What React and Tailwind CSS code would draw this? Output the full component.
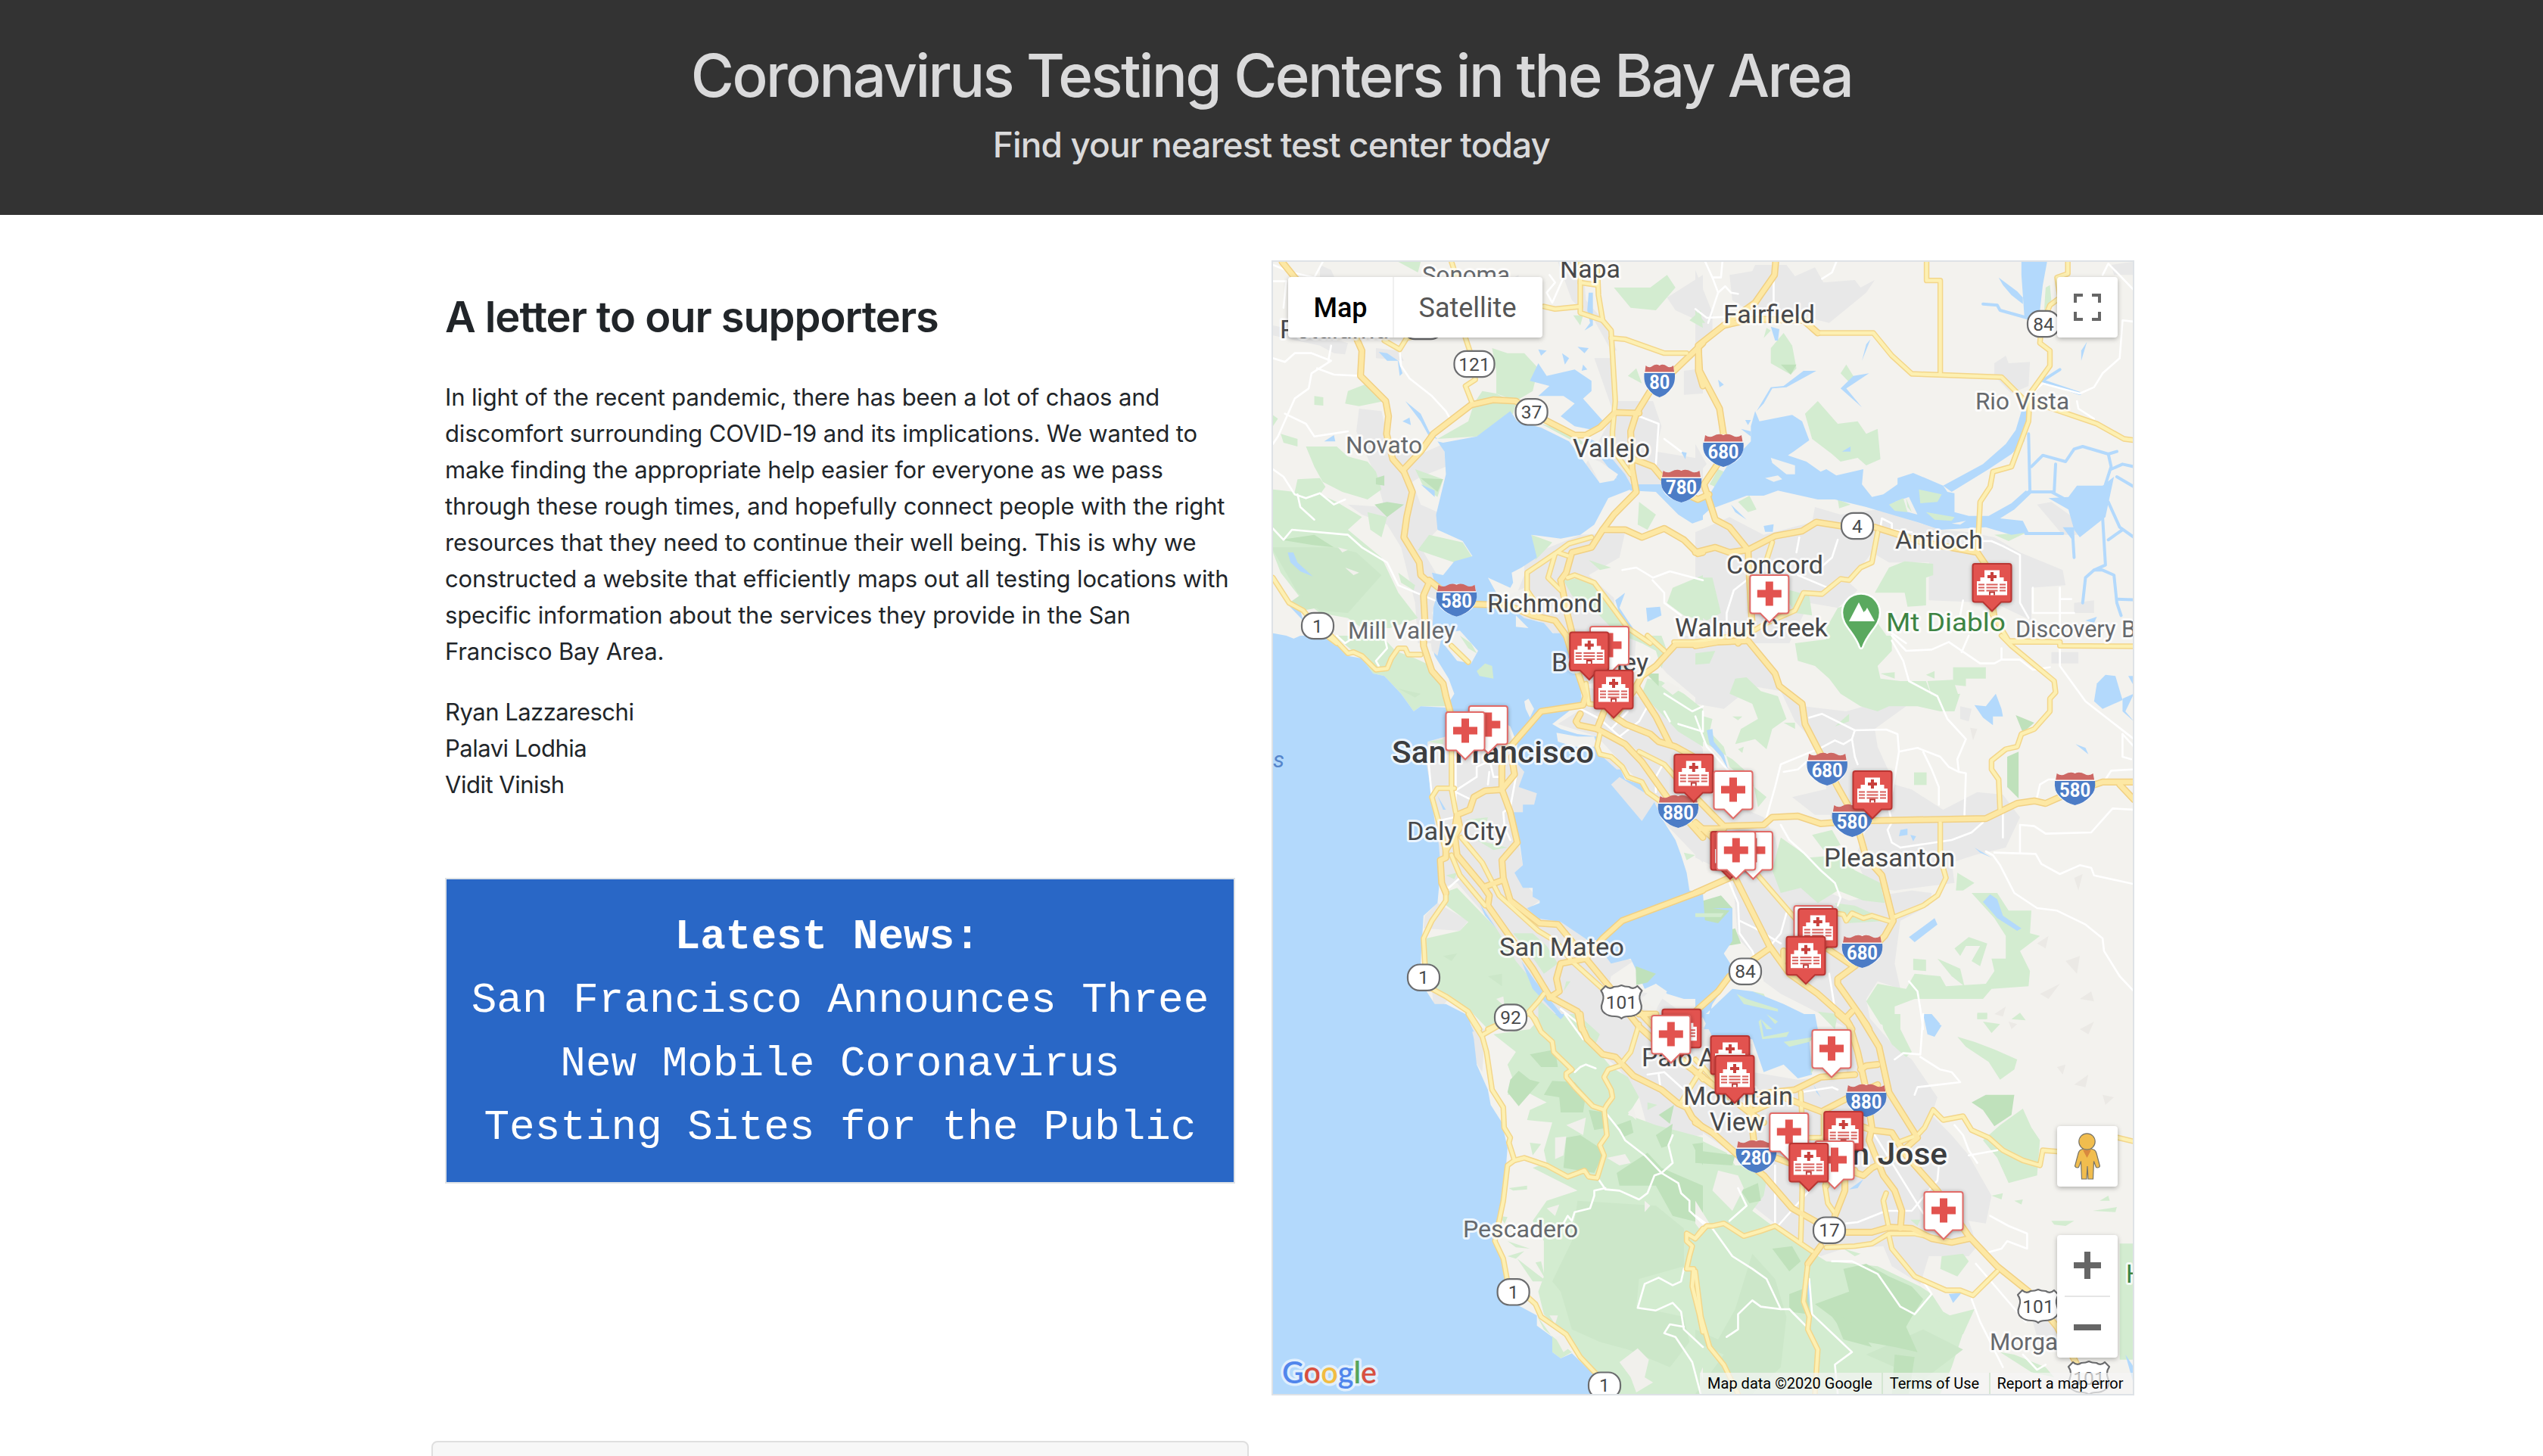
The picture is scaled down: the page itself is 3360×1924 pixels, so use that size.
import React from "react";

// Map geometry, kept per tile. Each tile has its own local unit grid.
const tiles = [
  {
    t: "translate(1670 330) scale(0.3699 0.33333)",
    urban: [
      "32,300 200,340 300,370 290,415 250,410 200,380 32,340",
      "340,630 420,640 445,760 560,810 640,770 650,860 560,900 530,920 560,1010 640,1050 620,1110 560,1180 640,1330 600,1440 640,1560 550,1560 540,1400 490,1180 440,1090 350,1050 300,1010 430,1020 400,900 330,720",
      "1050,48 1140,48 1150,200 1220,290 1260,400 1240,400 1180,280 1100,200",
      "1180,430 1240,430 1260,600 1390,600 1420,700 1400,800 1568,830 1568,960 1300,950 1200,920 1150,850 1250,650",
      "1568,100 1440,190 1470,240 1568,290", "1500,480 1568,470 1568,570 1500,575",
      "930,1220 1130,1130 1290,1120 1270,1220 1160,1290 1250,1380 1260,1500 1300,1560 1080,1560 980,1470 900,1480 890,1400 930,1290",
      "400,390 480,400 500,440 400,430", "200,60 240,80 260,130 200,110", "860,130 910,100 900,210 860,200",
    ],
    green: [
      "480,48 560,48 550,90", "1250,150 1380,150 1440,100 1470,150 1400,240 1310,230", "1520,280 1560,240 1568,310",
      "815,390 870,410 930,410 980,470 960,560 900,600 830,570 830,480", "300,560 370,530 430,600 340,620 290,610",
      "180,580 212,585 212,618 180,615", "620,750 730,680 750,610 780,560 830,570 900,610 890,650 760,740",
      "990,690 1060,710 1120,745 1170,790 1090,750", "150,780 260,780 300,820 370,840 400,880 420,950 370,990 280,960 210,920 180,860",
      "32,950 110,960 120,910 200,905 220,940 200,970 260,1000 350,1060 300,1110 420,1220 480,1360 550,1460 450,1500 350,1500 300,1460 200,1440 130,1380 60,1280 32,1200",
      "370,1040 440,1060 420,1140 380,1110", "590,1130 710,1160 745,1220 680,1240 600,1210 550,1190", "540,870 640,910 620,980 570,940",
      "1460,1340 1568,1290 1568,1470 1500,1450 1440,1400", "1070,1310 1140,1300 1220,1360 1280,1450 1350,1560 1260,1520 1190,1440 1100,1370",
      "955,1130 1030,1160 970,1230", "1340,1000 1400,1050 1370,1110 1335,1090", "60,730 120,750 120,780 70,765", "32,655 50,670 32,700",
      "480,1280 540,1330 535,1350 490,1320", "1300,500 1330,470 1350,530", "1160,1230 1240,1260 1200,1270", "1105,260 1140,260 1130,300",
    ],
    dark: ["395,1010 440,1000 500,1010 440,1060", "60,1150 180,1130 250,1180 170,1170", "560,905 640,910 620,960", "400,905 430,895 430,935 400,930"],
    mid: ["90,1400 180,1330 190,1420 140,1430", "32,1180 250,1180 330,1200 420,1290 300,1440 200,1430 120,1360 32,1190"],
    light: ["290,1260 340,1280 320,1290", "265,1180 300,1190 280,1200"],
    water: [
      "640,765 760,740 880,640 905,680 990,705 1090,760 1150,850 1200,925 1260,905 1310,950 1230,985 1180,1090 1130,1130 1060,1145 955,1130 975,1220 920,1260 885,1280 890,1320 880,1340 800,1300 840,1380 930,1460 1000,1480 1070,1570 600,1570 605,1420 620,1360 600,1280 640,1290 680,1235 745,1215 710,1155 620,1110 615,1050 650,890 645,800 620,760",
      "1150,740 1200,770 1290,890 1310,930 1440,930 1568,1010 1568,1070 1530,1085 1480,1050 1400,960 1310,955 1260,905 1200,820",
      "980,450 1010,500 1110,475 1170,520 1170,560 1140,590 1220,690 1200,720 1110,700 1060,660 1110,610 1070,580 980,580 1020,540 950,520",
      "980,395 1010,400 990,420", "1120,385 1160,390 1145,410", "1065,410 1090,430 1075,455", "1140,455 1155,475 1135,480",
      "1160,170 1175,170 1175,300 1145,320 1165,290 1155,240", "410,405 440,410 480,440 495,490 485,500 478,440 440,440",
      "505,600 560,650 590,720 620,750 590,740 560,680", "85,1200 105,1200 120,1240 175,1295 130,1275 95,1240",
      "32,1520 80,1530 170,1570 32,1570", "80,1400 130,1430 140,1470", "1255,1390 1290,1360 1270,1420 1330,1520 1280,1480", "1365,1420 1415,1415 1420,1450 1370,1475",
      "215,760 250,735 255,760", "495,680 520,665 525,695", "1490,800 1510,805 1505,830", "560,930 610,955 610,980",
    ],
    land: ["1150,820 1200,840 1265,890 1250,915 1200,925", "870,1370 930,1340 960,1360 940,1420 900,1400", "900,1450 945,1500 900,1495"],
    white: [
      "485,400 490,460 520,510 600,580 650,640 670,680", "32,430 75,445 110,410 170,410 240,440 170,490 160,550 110,590 50,740 32,770",
      "190,470 250,495 345,500", "75,650 150,690 180,740 300,720", "32,870 70,900 110,970 150,985 200,965 250,1010 290,990",
      "120,970 130,1020 180,1070", "32,1105 70,1150 100,1110 300,1130 350,1180 440,1240 480,1330 610,1390", "1340,660 1410,690 1400,850",
      "1430,750 1490,800", "1020,100 1040,130 1010,170 1030,210 1070,110", "1280,1270 1330,1260 1390,1300 1450,1275 1568,1310", "1388,1310 1430,1360 1430,1400 1490,1450",
      "32,60 100,90 180,110 210,48", "32,125 80,125 70,230", "240,380 230,440",
    ],
    minor: [
      "670,48 700,150 720,350 735,400 755,515 720,540 745,610", "1190,48 1195,180 1210,280 1240,320 1255,600 1245,720 1245,790 1310,890",
      "1130,48 1130,250 1210,280", "1130,130 1190,140", "1130,225 1040,235 1000,225", "1240,350 1290,355 1430,410 1510,410",
      "430,360 485,395 510,350 600,330", "32,1300 90,1400 140,1430 200,1510 260,1560", "1170,1140 1090,1165 1040,1205 940,1280 940,1350 970,1400",
      "1040,1205 1015,1300 1060,1350", "1050,1200 1090,1215", "1085,1300 1110,1290 1180,1320 1220,1380 1300,1500 1380,1560", "1465,1555 1568,1555",
    ],
    major: [
      "65,48 110,110 330,350 350,400 345,500 435,600 445,660 438,730 460,830 500,880 530,960 510,1060 500,1140 555,1240 560,1290 590,1320 570,1370 575,1470 570,1560",
      "590,1310 630,1345 750,1405 870,1410 960,1450 1040,1470 1080,1530 1110,1560", "1568,370 1465,480 1380,560 1330,650 1310,720 1315,870 1330,960 1250,1050 1210,1110 1170,1180 1100,1200 1080,1280 1060,1310 1085,1450 1110,1560",
      "500,870 560,800 605,730 740,615 820,595 900,600 960,650 1110,735 1150,735 1200,705 1255,645 1340,648", "1210,1110 1290,1110 1350,1140 1430,1105 1500,1150 1550,1205 1568,1200",
      "1320,830 1390,860 1420,900 1490,960 1550,990 1590,970", "1552,390 1552,480 1568,540",
    ],
  },
  {
    t: "translate(2240 330) scale(0.3763 0.33333)",
    urban: [
      "120,100 200,85 210,60 320,60 350,105 420,70 450,130 560,120 580,150 630,120 600,170 470,290 400,270 200,250 130,200",
      "0,80 60,250 60,330 0,370", "1050,450 1090,420 1100,450 1175,445 1170,540 1110,570 1050,500",
      "0,1120 120,1060 240,1130 410,1080 420,1020 510,1050 640,1030 860,1110 960,1120 1050,1140 1140,1200 1290,1270 1300,1330 1180,1340 1180,1470 1050,1400 820,1390 820,1240 680,1240 620,1200 540,1320 570,1350 500,1420 400,1400 330,1560 100,1560 0,1440",
      "1200,1010 1250,1000 1350,1080 1360,1130 1290,1130", "0,770 40,850 0,900", "1330,1400 1400,1390 1400,1440 1330,1440", "1470,100 1537,100 1537,48 1460,60",
    ],
    green: [
      "265,390 310,330 340,380 355,470 335,495 265,450", "385,650 430,600 500,690 570,680 600,730 640,710 650,830 600,855 570,825 510,840 480,810 410,750",
      "510,490 530,455 560,510 540,525", "240,350 250,310 265,320", "550,970 575,925 620,980", "50,930 80,870 100,880 70,940", "150,1000 190,975 215,1030 185,1040",
      "630,1360 680,1260 735,1235 835,1245 835,1290 810,1300 810,1410 745,1415 735,1360",
      "0,1300 60,1300 90,1440 40,1470 0,1440", "1050,1130 1165,1120 1100,1155", "300,1340 400,1370 410,1450 350,1440", "460,1500 500,1420 560,1400 640,1480 690,1560 460,1560",
      "1230,150 1245,140 1250,200 1225,240", "0,240 35,290 0,290", "500,990 545,1010 505,1025",
    ],
    dark: ["300,455 355,455 335,495"],
    water: [
      "195,760 195,700 210,640 225,680 340,655 375,680 400,755 345,800 325,815 390,840 440,880 460,870 495,895 590,870 585,930 620,980 660,970 710,930 710,905 765,885 870,935 885,960 910,965 910,1040 960,1055 1030,1055 1110,1005 1160,955 1180,965 1120,1030 1070,1065 1150,1075 1170,1120 1110,1130 1020,1100 860,1110 780,1080 660,1040 600,1020 490,990 430,990 290,955 240,975 180,975 50,1030 0,1080 0,1010 50,970 110,860",
      "870,935 1010,850 1090,770 1125,715 1145,640 1175,640 1155,760 1110,810 1030,870 900,960",
      "1310,980 1340,935 1430,935 1470,900 1440,1060 1350,1140 1330,1110 1310,1030 1240,985",
      "1145,48 1235,48 1220,140 1210,240 1190,290 1155,260 1150,180 1145,100", "1065,110 1130,165 1150,190 1150,215 1110,180 1080,140",
      "425,480 380,480 310,540 265,545 215,640 240,610 270,550 320,545", "555,500 610,490 530,550 585,625 510,550", "615,355 585,440 600,375", "265,305 295,315 290,360 280,360",
      "80,515 100,535 85,545", "1355,440 1375,365 1355,400", "240,1095 275,1088 272,1118 245,1118", "125,1010 180,1070 140,1040", "160,710 195,720 195,740", "175,675 195,675 185,695",
      "1290,1100 1330,1100 1330,1160", "1370,1470 1410,1455 1400,1480", "515,800 545,780 545,800",
    ],
    land: ["265,825 350,855 350,890 320,890 270,845", "245,905 290,895 305,910 275,920", "700,1000 750,980 780,1050 730,1035", "900,1085 950,1075 930,1090"],
    greenTop: ["680,1010 730,985 745,1040 700,1035", "785,950 865,970 850,1000 790,1005", "740,985 760,1040 745,1020", "810,1040 910,1060 900,1075 840,1070"],
    channel: [
      "1170,730 1175,960", "1180,860 1220,815 1300,840 1330,790 1360,780 1450,810 1460,860 1440,930", "1265,850 1260,960 1180,960", "1170,960 1250,960 1300,990",
      "1430,1060 1440,1250 1400,1270 1430,1270 1470,1290 1480,1400 1495,1450", "1450,1000 1490,1100 1540,1140", "1460,870 1500,850 1540,860", "1480,900 1540,940",
      "1400,1270 1370,1300 1360,1400", "1160,1125 1290,1125", "1325,1130 1330,1220", "1010,215 1060,220 1070,240 1165,270", "1225,515 1280,475", "1220,520 1350,570",
      "1480,1385 1540,1388", "1450,1150 1500,1110", "1450,810 1480,800",
    ],
    white: [
      "35,48 60,110 90,110 95,48", "60,110 80,170 45,290", "80,170 105,145 125,170 150,175", "275,110 275,240", "495,48 480,90 445,115",
      "1540,285 1500,280 1490,430 1430,490 1400,545 1350,570 1220,530 1190,560", "1540,160 1450,55 1430,100", "1010,1155 1040,1155 1080,1175 1140,1210 1140,1400 1170,1460",
      "365,1140 355,1200", "500,1150 480,1220 440,1260", "650,1100 655,1065 690,1085 690,1110 760,1120", "1185,1340 1185,1440 1330,1440", "1280,1340 1280,1530",
      "110,1510 110,1440 135,1350 180,1310", "360,1290 465,1340", "940,1390 930,1450", "690,1520 740,1560", "1340,600 1345,630 1400,670", "0,235 40,270 120,265", "1280,1385 1320,1385",
    ],
    minor: [
      "812,48 812,122 860,122 860,490", "1308,48 1308,95 1270,110 1280,190 1245,220 1215,300 1210,370 1245,400 1245,460 1175,570 1170,680 1110,860 1045,880 1035,940 1000,1000 995,1110 990,1200",
      "640,1120 620,1240 580,1260 540,1310 510,1305 445,1365 380,1360 350,1430 250,1480 190,1520 0,1555", "270,1160 250,1230", "1040,1440 1100,1550 1280,1555",
      "430,330 625,330 690,420 760,492 1075,505 1150,590 1280,640 1410,690 1505,750 1540,755",
    ],
    major: [
      "282,48 278,100 210,210 100,300 10,380 15,480 85,630 100,740 90,830 30,930 70,1070 120,1100 185,1190 190,1300 195,1400 200,1500 150,1560", "100,300 200,275 380,280 430,330",
      "0,1200 70,1180 120,1200 185,1190 280,1135 375,1115 425,1080 510,1095 630,1100 800,1160 990,1200 1020,1250 1050,1460",
    ],
  },
  {
    t: "translate(1670 840) scale(0.3699 0.33333)",
    urban: [
      "585,420 860,330 930,540 975,625 965,670 925,700 890,700 925,910 900,940 985,1050 960,1070 1060,1135 1200,1240 1320,1290 1240,1350 1230,1400 1400,1420 1500,1500 1568,1500 1568,1560 1000,1560 900,1400 800,1120 690,980 630,1000 580,500",
      "1130,200 1370,250 1500,330 1568,450 1568,900 1430,740 1350,590 1190,400 1050,350 1150,280 1110,0 1330,0 1320,150",
      "575,1110 620,1060 730,1130 700,1170 570,1160", "600,1400 660,1440 640,1465 605,1465",
      "1500,0 1568,0 1568,270 1440,150 1400,100",
    ],
    green: [
      "250,0 420,0 470,60 540,90 580,110 640,190 650,280 560,280 535,300 490,230 430,160 390,150 340,80",
      "640,1020 690,1000 760,1080 830,1160 900,1290 960,1370 1000,1420 960,1480 900,1560 800,1560 740,1490 620,1400 570,1390 580,1200 700,1170 730,1135 640,1060",
      "890,1180 960,1180 1010,1230 1050,1300 1000,1340 950,1260", "585,420 640,410 640,430", "1370,170 1420,180 1500,230 1568,290 1568,440 1480,380 1420,310 1350,230",
      "1300,0 1420,0 1440,60 1420,130 1400,60", "720,730 800,720 790,760", "760,810 870,840 820,850", "650,950 690,940 680,965", "980,1440 1100,1560 980,1560", "1500,860 1540,870 1510,890", "1080,1370 1095,1370 1070,1410",
      "1568,1040 1530,1090 1568,1120",
    ],
    mid: ["480,210 560,230 540,245", "640,1270 690,1260 670,1290", "800,1350 850,1340 850,1390"],
    dark: ["1365,150 1410,150 1410,200"],
    light: ["1440,180 1490,210 1460,235 1420,200", "830,1440 855,1430 860,1470", "1350,1430 1420,1430 1400,1490 1350,1480"],
    water: [
      "32,10 80,25 130,0 240,0 300,80 350,90 390,150 430,160 490,230 535,300 560,280 650,285 680,230 660,170 610,80 590,-10 1080,-10 1110,80 1125,160 1135,250 1150,280 1100,290 1030,350 1060,370 1120,390 1190,400 1200,470 1270,520 1290,570 1350,590 1390,650 1430,740 1470,810 1490,870 1510,940 1520,1010 1568,1020 1600,1500 1568,1440 1500,1440 1440,1420 1400,1380 1360,1400 1340,1350 1310,1280 1240,1300 1200,1240 1060,1135 975,1120 940,1080 985,1060 985,1050 960,1035 960,1000 925,1000 895,940 925,910 915,830 900,770 890,700 925,700 925,670 965,670 975,625 910,600 930,540 900,500 905,430 880,360 840,330 700,340 650,400 585,420 580,500 600,640 610,740 625,830 630,900 625,1000 620,1060 570,1110 565,1200 560,1300 575,1400 610,1460 650,1460 720,1500 750,1570 32,1570",
      "620,635 650,690 640,690", "770,1060 830,1160 790,1110", "920,1290 970,1370 1070,1510 1060,1520 960,1400",
    ],
    land: ["930,260 945,250 965,290 950,325 935,290", "650,-10 700,-20 765,60 740,110 690,100 640,30", "1045,385 1120,400 1180,400 1190,440 1110,440 1050,420", "1400,1380 1440,1410 1400,1480 1350,1440"],
    urbanTop: ["1240,590 1270,560 1370,630 1400,650 1350,735", "1200,470 1290,490 1325,530 1260,530", "590,-30 640,-20 620,80 600,60"],
    greenTop: ["760,140 790,110 815,120 820,170 770,160", "700,0 740,30 760,70 730,50"],
    darkTop: ["1328,1310 1400,1340 1370,1375 1330,1385"],
    white: [
      "588,500 600,640", "690,610 760,560 760,520 800,500", "900,560 880,680 855,700 860,760 880,810", "685,620 740,650", "810,510 820,560 850,560", "800,590 805,540", "660,1000 700,960",
      "1130,290 1200,330 1240,370 1300,300", "1240,370 1330,460", "1270,400 1340,340 1370,280", "1430,230 1530,300 1568,280", "1430,300 1450,340", "1480,350 1568,380 1568,300",
      "1400,620 1400,560 1420,520", "1060,1480 1150,1560", "430,0 440,50 400,100 410,120", "640,730 680,720", "685,500 685,660", "260,0 290,30 330,0",
    ],
    minor: [
      "670,450 670,610 685,700", "600,640 620,605 680,605", "600,640 625,740 650,860", "705,800 780,900 840,1030 980,1170 1040,1210 1100,1290 1210,1400", "670,870 700,950 760,1030 790,1070",
      "650,1010 650,1050 600,1130 570,1200 575,1300", "600,1400 650,1430 730,1490 770,1560", "1000,1420 980,1450 940,1500 880,1520 800,1560", "950,1490 985,1560", "1370,0 1430,60",
      "1200,390 1190,440 1200,470 1240,480 1280,520 1300,560 1350,580 1370,620 1420,660", "1340,460 1430,510 1500,600", "240,0 300,70 320,65 350,80 400,135 440,130 455,90 480,50 505,50 515,75 560,75", "670,40 730,105",
      "1150,190 1160,270 1200,275",
    ],
    major: [
      "570,0 570,40 600,140 640,190 650,240 665,300 670,450", "850,610 850,520 860,440 880,440 990,300 1140,275 1150,240 1120,140 1080,0", "885,480 895,550 850,610 790,615 750,640 735,690 690,710 680,780 690,870 780,990 805,1030 800,1070 870,1180 960,1320 1020,1430 1120,1490 1135,1560",
      "850,610 880,700 905,820 850,890 855,960 880,1050 985,1140 1050,1145 1150,1280 1240,1400 1340,1490 1400,1560", "790,995 850,970", "690,710 700,760 650,850 650,880 630,890 635,980 650,1020",
      "1568,1010 1280,1130 1210,1200 1150,1280 1060,1300 1045,1360 1055,1410 1020,1435", "1130,310 1115,340 1125,355 1190,370 1290,430 1350,500 1440,640 1568,800", "1215,300 1190,370",
      "1250,320 1290,350 1380,390 1410,420 1470,440 1568,500", "1330,200 1400,320 1450,430", "1568,35 1470,35 1400,120 1350,160 1320,220 1260,310", "1400,1500 1340,1500",
    ],
  },
  {
    t: "translate(2240 840) scale(0.3763 0.33333)",
    urban: [
      "0,40 180,30 290,180 380,280 530,300 690,250 740,280 630,370 640,440 700,590 760,610 870,690 990,620 1080,630 1140,720 1090,840 980,870 900,900 910,980 700,1010 610,1000 560,880 600,770 480,760 440,450 350,340 300,220 200,200 100,290 0,270",
      "0,600 240,720 280,800 310,950 540,1050 760,1010 830,1020 820,1070 720,1130 700,1300 720,1400 640,1370 600,1440 620,1560 540,1560 440,1500 300,1420 240,1370 220,1280 150,1200 130,950 0,880",
      "1250,65 1345,65 1345,110 1250,110", "340,640 490,600 500,710 420,710", "930,280 970,290 960,340 930,330", "0,0 150,0 100,60 0,60",
    ],
    green: [
      "350,30 560,0 690,0 690,60 640,120 650,170 720,180 810,180 830,240 930,230 910,300 860,300 780,280 680,280 640,300 580,280 510,230 470,170 420,120 360,100",
      "905,125 1020,125 1020,170 950,170 950,200 905,195", "815,180 905,175 925,240 830,240", "140,170 180,165 230,220 290,240 320,330 270,370 250,450 210,410 140,430 160,370 220,330 200,270 120,230",
      "0,310 60,330 50,380 100,440 120,520 250,640 220,680 200,560 130,490 40,430 0,400", "300,800 400,880 500,870 560,930 650,980 665,1060 590,1050 500,1010 430,1060 370,1000 300,1020 270,930",
      "410,790 480,770 510,830 450,850", "490,1060 560,1070 680,1130 530,1140", "920,940 980,980 940,1010 915,1010",
      "970,1020 1060,1020 1100,1090 1180,1090 1175,1180 1210,1190 1140,1250 1175,1330 1170,1390 1040,1400 1010,1440 850,1440 770,1440 700,1470 700,1560 650,1540 600,1450 640,1380 740,1400 770,1340 860,1350 880,1390 1020,1380 1050,1330 1040,1280 1090,1280 1090,1190 1050,1120",
      "850,1280 930,1320 945,1390 900,1350", "765,1280 810,1285 810,1330 765,1325", "910,1240 960,1195 1025,1220 1000,1310 970,1290 1000,1230 950,1230 930,1270",
      "768,542 812,542 812,592 768,592", "650,150 700,145 700,170", "810,155 840,140 840,170", "490,360 540,310 540,340", "310,345 350,345 350,370", "150,450 170,440 165,465", "0,70 70,60 50,110 0,115",
      "990,1495 1025,1495 1025,1520 990,1520", "1110,1520 1140,1495 1160,1525", "200,1410 240,1420 300,1560 240,1560", "430,1490 500,1500 490,1560", "130,320 165,320 150,335",
    ],
    dark: ["1095,480 1135,460 1135,645 1095,600", "1125,315 1190,345 1150,385", "0,1060 90,1030 130,1080 130,1180 60,1200 0,1140", "80,1180 140,1160 160,1220 110,1230"],
    shade: ["1330,960 1360,945 1345,1010", "1200,1220 1240,1190 1230,1240", "1300,1290 1350,1270 1340,1340", "1210,1420 1280,1380 1240,1440", "1350,1440 1390,1410 1400,1450", "1050,1500 1090,1470 1080,1510", "965,365 990,370 975,415"],
    water: [
      "0,1120 80,1140 120,1090 60,1080 130,1080 130,1210 100,1260 140,1330 60,1460 30,1560 420,1560 400,1510 310,1460 200,1410 130,1400 0,1540",
      "980,275 1020,280 1055,230 1075,290 1080,320 1045,320 1045,355 1010,325", "1410,190 1440,155 1475,160 1500,255 1430,290 1400,260", "1500,250 1540,230 1510,300 1540,340 1500,300",
      "1335,430 1370,445 1380,470", "720,770 745,765 745,790 715,795", "755,790 775,795 765,815", "980,840 1040,880 1000,860", "1010,1055 1035,1025 1060,1045 1080,1110 1145,1160 1130,1170 1060,1120",
      "750,1195 840,1120 850,1145 770,1215", "40,375 60,370 65,420 100,470 115,530 90,480 50,430", "800,1500 830,1500 860,1540 820,1560", "1520,160 1540,160 1540,200",
    ],
    greenTop: ["145,1420 170,1460 290,1490 290,1480 180,1440", "230,1520 270,1560 250,1560", "0,1100 100,1100 90,1115 0,1115"],
    white: [
      "400,325 445,310 560,375 670,372 710,390 715,460 780,445 860,480 890,520 925,540 950,545 945,710", "715,460 700,560 680,690 690,740 675,770 690,820 720,840",
      "560,375 550,410 520,430 490,415 440,445 300,510 280,600 250,720", "550,410 560,480 570,510", "800,460 830,530 855,600 855,670", "690,20 730,100 750,180 850,240 885,330 950,410 920,490 925,540",
      "690,0 740,60 830,55 890,25 1000,110 1050,110 1075,95 1140,95 1185,135 1245,125", "960,0 935,65", "1075,95 1075,50", "1280,40 1280,120 1370,260 1540,410", "1200,640 1210,590 1240,570 1260,570",
      "1080,700 1080,800", "1140,750 1190,755 1230,785 1390,780 1465,685 1540,690", "1140,750 1140,860", "1020,855 1045,870 1070,910 1120,1020 1200,1080 1270,1090 1370,1145 1430,1200 1435,1250 1490,1350 1540,1410",
      "1050,860 1195,865 1215,905 1280,945 1350,910 1390,920 1400,950 1540,985", "720,840 900,810 970,780 1010,740", "300,750 330,810 380,860 440,930 490,980 510,1040 500,1070",
      "120,980 150,1060 155,1180 200,1250 210,1280", "320,1100 300,1180 270,1220", "155,1130 210,1160 300,1220", "470,1340 490,1480", "750,1370 780,1410 790,1480 800,1560", "0,320 40,440 120,540", "1440,570 1460,535 1540,530",
      "1500,390 1500,480 1530,490", "1500,390 1540,440", "310,540 360,530 390,500",
    ],
    minor: [
      "1075,0 1110,40 1260,180 1265,225 1245,250 1245,300 1190,370 1145,390 1130,440 1090,450 1040,495 1040,530 1065,570 1070,690", "1110,25 1280,25 1280,40 1540,42",
      "860,740 860,880 880,960 850,1030 800,1070 700,1115", "490,1100 520,1105 530,1130 550,1100 590,1120 620,1110 690,1135", "220,950 350,1120",
    ],
    major: [
      "185,20 280,150 295,200 375,270 385,350 440,470 500,600 560,720 600,880 655,950 695,1130 665,1190 560,1310 500,1360 500,1380 600,1540 610,1560", "0,640 100,755 240,750 270,720 360,715 440,745 550,735 1020,725 1130,665 1190,655 1230,665 1300,630 1430,580 1540,580",
      "1490,590 1540,650", "0,740 60,800 140,960 260,1230 330,1340 430,1420 530,1520 550,1560", "0,40 80,25 185,20", "0,1020 140,950", "0,1490 80,1410 120,1350 260,1240", "20,765 100,765", "450,1230 555,1310", "525,1520 550,1490", "310,1290 310,1250",
    ],
  },
  {
    t: "translate(1670 1340) scale(0.3699 0.33333)",
    urban: ["1150,0 1568,0 1568,480 1480,490 1370,450 1340,330 1270,220 1200,150 1170,60", "735,40 790,60 780,230 750,180"],
    green: [
      "820,80 950,60 1000,0 1120,0 1200,80 1180,130 1240,210 1300,250 1340,330 1300,400 1400,440 1568,490 1568,1506 1200,1506 1130,1350 1080,1290 1040,1240 1000,1190 980,1100 1000,1040 1000,900 960,820 1010,740 1120,700 960,610 1010,590 1000,540 1030,430 940,420 950,380 1010,350 940,310 870,320 890,260 870,200 900,150",
      "875,690 940,680 940,695 890,700", "870,960 930,940 900,970", "905,970 1010,1060 960,1060", "970,985 990,980 1005,1050", "870,900 950,930 900,925", "950,510 990,515 960,560", "1370,350 1405,360 1370,380", "975,1195 1000,1250 1100,1340 1060,1365 1030,1340 1030,1280", "840,800 870,805 860,830",
    ],
    mid: ["1120,740 1400,760 1500,850 1500,1000 1340,1050 1330,1160 1500,1200 1520,1300 1450,1400 1300,1330 1200,1300 1100,1250 1060,1100 1030,1060 1100,900"],
    dark: [
      "950,160 1040,140 1050,210 990,210", "880,260 910,225 950,260 985,270 910,365 870,310", "1030,265 1110,270 1150,320 1140,390 1060,390 1055,330 1000,320", "1080,490 1130,480 1200,530 1210,560 1180,630 1070,610",
      "1160,380 1220,390 1230,450 1180,460", "1260,440 1310,420 1320,470 1280,490", "1400,480 1460,435 1450,520 1420,530", "1260,630 1370,550 1420,610 1568,680 1568,830 1460,800 1400,680 1270,680", "1410,400 1465,360 1450,435", "1530,515 1568,510 1568,600",
    ],
    light: ["1080,440 1150,410 1140,480 1110,460", "1040,490 1080,485 1070,560 1040,575", "1225,570 1290,555 1310,590 1270,600", "1300,390 1320,370 1330,420", "1360,740 1380,760 1360,785", "1040,1280 1080,1270 1095,1320 1070,1340", "1270,1380 1335,1325 1375,1370 1360,1440 1390,1460 1330,1500 1310,1440", "1010,770 1055,755 1040,800", "1020,1195 1050,1195 1040,1230", "1560,1420 1568,1400 1568,1450"],
    water: [
      "32,0 730,0 750,100 760,200 800,300 810,360 850,430 870,530 865,600 850,760 820,900 850,980 870,1060 900,1150 975,1195 975,1235 1030,1280 1030,1340 1060,1365 1100,1345 1180,1430 1200,1506 32,1506", "1040,0 1075,0 1060,20",
    ],
    white: [
      "1220,390 1270,460 1290,500 1360,560 1420,630 1480,670 1490,710 1520,740 1520,780 1568,830", "1195,655 1220,695 1270,700 1340,735 1370,710 1395,640 1420,630 1460,590 1445,520 1460,480", "1220,690 1180,700 1180,720 1165,770 1110,785 1100,820 1085,800 1070,830",
      "1500,1010 1490,1060 1460,1075 1410,1045 1360,1070 1335,1165 1400,1175 1460,1145 1490,1180 1500,1250 1568,1320", "1500,1240 1450,1230 1430,1265 1470,1280 1530,1380 1560,1506", "1110,230 1130,210 1150,200 1185,215", "1370,240 1430,230 1500,300", "1075,0 1140,100", "1410,240 1415,280",
    ],
    minor: [
      "730,0 780,90 795,150 815,300 855,370 858,450 880,490 875,510 895,580 870,600 855,740 825,900 855,970 870,1060", "940,1120 970,1150 990,1200 1080,1270 1130,1360 1190,1430", "785,80 840,45",
      "895,580 930,570 1010,600 1085,645 1145,620 1160,645 1190,650 1215,560 1200,520 1225,480 1215,380 1175,365 1110,290 1080,250 1080,235 1100,220 1035,150 1030,110 990,70 970,20 950,0",
      "1215,380 1225,360 1245,330 1240,300 1215,250 1230,220 1270,205 1310,150 1340,40", "1568,850 1540,890 1510,870 1510,900 1530,920 1520,960 1510,1010 1535,1010 1530,1080 1555,1190 1568,1260", "1490,350 1568,210", "1500,180 1568,260",
    ],
    major: ["1130,0 1135,50 1155,100 1210,160 1255,170 1320,245 1420,300 1480,355 1510,370 1530,410 1568,450", "1290,-20 1340,50 1420,130 1568,250"],
  },
  {
    t: "translate(2240 1340) scale(0.3763 0.33333)",
    urban: ["200,230 360,260 530,240 560,0 600,0 700,130 760,180 850,330 830,400 900,480 960,560 1040,720 1020,830 960,820 990,920 960,960 820,960 790,1070 690,1000 660,920 520,930 440,960 370,910 280,830 200,760 240,650 140,560 0,450 0,60 60,40 200,120", "1180,1200 1270,1200 1340,1300 1300,1360 1200,1280"],
    green: [
      "0,490 110,550 140,600 200,600 250,660 240,720 200,780 260,830 390,930 460,980 560,990 640,1000 790,1080 830,1110 870,1180 950,1230 900,1400 860,1506 0,1506", "650,0 720,0 720,60 760,150 740,170 690,120 660,60", "920,90 980,110 1050,140 1130,180 1120,220 1070,260 1030,190 950,130",
      "1010,500 1070,440 1150,375 1180,450 1210,500 1200,640 1100,670 1060,570", "865,960 940,950 960,980 920,1040 860,1010", "1395,780 1480,765 1475,785", "1250,820 1330,820 1300,840 1260,835", "1010,30 1070,40 1040,75", "840,1210 980,1170 940,1270",
      "1420,740 1450,720 1455,740", "1490,910 1540,910 1540,1370 1490,1370", "1040,720 1080,710 1075,735", "1120,740 1150,735 1145,755", "990,0 1025,0 1020,20 990,20", "520,930 580,950 560,960", "1070,1340 1120,1350 1230,1400 1260,1440 1180,1420", "755,815 790,815 780,840",
    ],
    mid: ["200,950 280,1050 320,1200 300,1400 200,1506 0,1506 100,1350 0,1300 0,1250 80,1290 140,1170", "600,1350 800,1250 940,1330 800,1450"],
    dark: [
      "1020,320 1120,320 1110,400 1050,445 1010,380 970,350", "520,1010 600,990 680,1040 760,1080 800,1130 760,1200 740,1240 780,1340 700,1320 600,1300 520,1260 480,1200 420,1150 540,1100", "330,1110 400,1080 400,1190 330,1180",
      "270,930 340,920 370,980 330,1020", "160,700 220,670 230,740 190,750", "0,540 140,560 130,600 0,590", "700,1350 770,1360 750,1506 690,1506", "480,1180 560,1230 620,1320 520,1290",
    ],
    light: ["80,620 150,640 170,690 130,780 60,700", "0,740 50,830 20,860 0,830"],
    shade: ["1350,60 1400,30 1380,80", "1270,210 1300,200 1290,240", "1330,280 1380,240 1370,290", "1100,30 1130,40 1110,60", "1430,320 1470,330 1440,360"],
    water: ["20,0 420,0 430,60 400,100 410,240 360,255 310,200 240,230 200,100 60,90", "800,0 830,30 865,45 840,90 815,80", "415,280 440,330 425,310", "540,695 590,655 570,690", "890,1110 935,1105 905,1145", "1510,1350 1540,1400 1540,1470", "390,1060 405,1060 400,1160"],
    greenTop: ["230,20 240,90 330,70 320,90 235,100 222,30", "310,110 420,90 400,110 330,130", "410,130 425,200 405,240", "250,0 290,30 280,40"],
    white: [
      "280,600 280,830", "0,800 60,850 130,960 200,1010 250,1050 300,1170 230,1160 200,1135 150,1190 150,1250 110,1280", "530,830 570,825 670,780 760,780 850,660 855,600", "630,480 800,790", "1035,800 1100,840 1165,870 1165,930 1095,900 1075,930 1010,950",
      "480,980 550,980 640,1030 720,1160 770,1190 830,1110 800,1060", "970,1130 1000,1220 1080,1400", "985,990 1160,1220", "400,1050 410,1190 550,1340 490,1390 500,1506", "800,0 790,160 730,155 700,180", "790,170 860,220 900,230 930,270 780,290 770,320",
      "330,1170 400,1250", "370,310 480,290 500,300", "150,690 180,760 120,820", "400,700 290,840", "960,560 1060,540", "300,1170 330,1170", "1150,1350 1200,1410 1230,1390", "910,440 940,480 960,540 990,590",
    ],
    minor: [
      "440,920 395,990 380,1140 400,1200 395,1250 430,1330 420,1506", "455,680 465,750 490,790", "370,310 375,420 375,700 370,900", "0,890 40,840 60,840 100,830 170,880 230,860 280,840 410,940", "460,925 560,920 620,910 680,870 770,870 850,890",
      "680,880 690,930 770,1040 880,1095 930,1095 975,1115 1060,1020", "670,710 660,740 680,850", "780,480 805,450 835,380 870,420 940,405 970,460 1030,490 1080,540 1150,580 1210,600 1220,540 1270,545", "1485,490 1540,505", "450,380 450,500",
      "0,1020 20,1200 50,1320 100,1390 150,1506", "390,490 450,490", "0,180 100,300", "710,510 780,480",
    ],
    major: [
      "500,0 540,40 570,150 600,300 620,450 610,500 660,640 700,700 725,780 720,850", "575,0 645,130 680,310 780,490 710,560 620,610 590,640 540,620", "0,230 110,320 190,390 270,350", "190,320 350,300 440,250 560,240",
      "310,330 450,390 620,460 690,470 740,560 850,700 960,880 1060,1000 1170,1100 1270,1240 1340,1390 1380,1440", "0,430 60,470 150,560 240,640 340,770 450,840", "190,350 205,500", "210,540 330,590 560,620", "530,865 620,865 680,845 760,850 830,890 900,905 960,890",
      "525,640 525,700 490,800", "440,920 395,990", "455,380 540,330 640,280", "580,220 600,205 640,200", "450,500 460,680", "240,430 190,390",
    ],
  },
];

function Polys({ layer, fill }) {
  return (
    <g fill={fill}>
      {tiles.map((tile, i) => (
        <g key={i} transform={tile.t}>
          {(tile[layer] || []).map((p, j) => <polygon key={j} points={p} />)}
        </g>
      ))}
    </g>
  );
}

function Lines({ layer, color, width }) {
  return (
    <g fill="none" stroke={color} strokeWidth={width} strokeLinejoin="round" strokeLinecap="round">
      {tiles.map((tile, i) => (
        <g key={i} transform={tile.t}>
          {(tile[layer] || []).map((p, j) => <polyline key={j} points={p} vectorEffect="non-scaling-stroke" />)}
        </g>
      ))}
    </g>
  );
}

// [text, x, baseline, width, kind]
const labels = [
  ["Sonoma", 1879, 374, 116, "town"], ["Napa", 2061, 367, 80, "city"], ["Petaluma", 1691, 447, 144, "city"],
  ["Novato", 1778, 599, 101, "town"], ["Vallejo", 2078, 604, 102, "city"], ["Richmond", 1965, 809, 152, "city"],
  ["Mill Valley", 1781, 844, 142, "town"], ["Walnut Creek", 2213, 841, 202, "city"], ["Fairfield", 2277, 427, 121, "city"],
  ["Rio Vista", 2610, 541, 124, "town"], ["Antioch", 2504, 725, 116, "city"], ["Concord", 2281, 758, 128, "city"],
  ["Mt Diablo", 2492, 834, 158, "park"], ["Discovery Bay", 2663, 842, 190, "town"], ["Berkeley", 2050, 887, 128, "city"],
  ["San Francisco", 1839, 1008, 267, "big"], ["Daly City", 1859, 1110, 132, "city"], ["San Mateo", 1981, 1263, 165, "city"],
  ["Pleasanton", 2410, 1145, 173, "city"], ["Pescadero", 1933, 1635, 152, "town"], ["Palo Alto", 2169, 1409, 136, "city"],
  ["Mountain", 2224, 1460, 145, "city"], ["View", 2259, 1494, 73, "city"], ["San Jose", 2398, 1539, 175, "big"],
  ["Morgan Hill", 2629, 1784, 160, "town"], ["Henry", 2809, 1695, 86, "park"],
];
const kinds = {
  town: { size: 31, fill: "#66696d", weight: 400 },
  city: { size: 33, fill: "#47484a", weight: 400 },
  big: { size: 41, fill: "#3c3d3f", weight: 500 },
  park: { size: 34, fill: "#3d8443", weight: 400 },
};

const stateRoutes = [
  ["1", 1741, 827], ["121", 1948, 481], ["37", 2023.6, 544.3], ["116", 1880, 431], ["84", 2700, 428], ["4", 2454, 695],
  ["1", 1881, 1291.7], ["92", 1996, 1344.5], ["84", 2306, 1283.7], ["1", 1999.6, 1707.3], ["1", 2120, 1830.7], ["17", 2417, 1625.7],
];
const usRoutes = [["101", 2142.4, 1323], ["101", 2693, 1725], ["101", 2760, 1820]];
const interstates = [
  ["80", 2192.7, 503], ["780", 2221.5, 642], ["580", 1924.5, 792.7], ["680", 2277, 595], ["880", 2217.4, 1072], ["680", 2414.2, 1016],
  ["580", 2447.3, 1084], ["580", 2741.6, 1042], ["680", 2460.5, 1257], ["880", 2465.8, 1454], ["280", 2320.5, 1528],
];

const markers = [
  ["h", 2632, 744], ["c", 2337.8, 759], ["c", 2126.5, 827], ["h", 2099.8, 834.5], ["h", 2132, 885], ["c", 1966.3, 932], ["c", 1936, 940],
  ["h", 2237.8, 996], ["c", 2290, 1018], ["h", 2474, 1018], ["h", 2286, 1098], ["c", 2316.4, 1098], ["c", 2293.8, 1098],
  ["c", 2396, 1196], ["h", 2401.8, 1200], ["h", 2386, 1236.7], ["h", 2221.9, 1332.7], ["c", 2207.8, 1341], ["c", 2420, 1360],
  ["h", 2286, 1368], ["h", 2292, 1394], ["h", 2435.7, 1468], ["c", 2363.8, 1470], ["c", 2424, 1507], ["h", 2389.8, 1510], ["c", 2568, 1574],
];
const pin = "M-25.5 4q0-3 3-3h45q3 0 3 3v44.500q0 3-3 3h-10.500l-12 12l-12-12h-10.500q-3 0-3-3z";

function Marker({ kind, x, y }) {
  return (
    <g transform={`translate(${x} ${y})`}>
      <path d={pin} fill="#000" opacity="0.45" filter="url(#soft)" transform="translate(0 1)" />
      {kind === "c" ? (
        <>
          <path d={pin} fill="#fff" stroke="#e26a67" strokeWidth="2" />
          <path d="M-5 9.500h10v11h11v10h-11v11h-10v-11h-11v-10h11z" fill="#e2534f" />
        </>
      ) : (
        <>
          <path d={pin} fill="#e2534f" stroke="#b93532" strokeWidth="2" />
          <path d="M-10 9.500h20v9.500h5.500v5h4.500v18.500h-40v-18.500h4.500v-5h5.500z" fill="#fff" />
          <path d="M-2 12h4v4h4v4h-4v4h-4v-4h-4v-4h4z" fill="#c8403c" />
          <path d="M-18 28.500h8M-18 32.500h8M-18 36.500h8M-7.500 28.500h15M-7.500 32.500h15M-7.500 36.500h3M7.500 36.500h-3M10 28.500h8M10 32.500h8M10 36.500h8M-5 36.500h10" stroke="#d9605c" strokeWidth="1.900" />
          <path d="M-3 42.500v-4h6v4" fill="none" stroke="#b93532" strokeWidth="1.800" />
        </>
      )}
    </g>
  );
}

function Terrain() {
  return (
    <svg viewBox="1682 346 1136 1496" className="block h-[1496px] w-[1136px] font-[Roboto,sans-serif]">
      <defs>
        <filter id="soft" x="-30%" y="-30%" width="160%" height="160%"><feGaussianBlur stdDeviation="3" /></filter>
      </defs>
      <rect x="1682" y="346" width="1136" height="1496" fill="#f3f2ee" />
      <Polys layer="urban" fill="#e8e8e8" />
      <Polys layer="green" fill="#d3ecd0" />
      <Polys layer="mid" fill="#cce7c9" />
      <Polys layer="dark" fill="#bfe1bb" />
      <Polys layer="light" fill="#f1f0ec" />
      <Polys layer="shade" fill="#ebe9e5" />
      <Polys layer="water" fill="#b3d9fc" />
      <Lines layer="channel" color="#b3d9fc" width="4" />
      <Polys layer="land" fill="#f1f1ee" />
      <Polys layer="urbanTop" fill="#e8e8e8" />
      <Polys layer="greenTop" fill="#d3ecd0" />
      <Polys layer="darkTop" fill="#bfe1bb" />
      <Lines layer="white" color="#ffffff" width="2.6" />
      <Lines layer="minor" color="#f3d68a" width="7.4" />
      <Lines layer="major" color="#f1d083" width="9.2" />
      <Lines layer="minor" color="#fdf0b2" width="4.4" />
      <Lines layer="major" color="#fde8a4" width="6.2" />

      <path d="M2459 784.500c-14 0-25 11-25 25c0 18 16 25 23 46q2 3 4 0c7-21 23-28 23-46c0-14-11-25-25-25z" fill="#5aa95f" stroke="#fff" strokeWidth="2.500" />
      <path d="M2443 821l13-25 7 14 4-7 10 18zM2460 813l4-6 3 6z" fill="#fff" />

      {labels.map(([text, x, y, w, kind], i) => (
        <text key={i} x={x} y={y} textLength={w} lengthAdjust="spacingAndGlyphs" fontSize={kinds[kind].size} fontWeight={kinds[kind].weight}
          fill={kinds[kind].fill} stroke="#fff" strokeOpacity="0.75" strokeWidth="6" strokeLinejoin="round" paintOrder="stroke">{text}</text>
      ))}
      <text x="1682" y="1014" fontSize="30" fontStyle="italic" fill="#5585cb">s</text>

      {stateRoutes.map(([n, x, y], i) => (
        <g key={i}>
          <rect x={x - (n.length > 2 ? 26.5 : 21)} y={y - 17.2} width={n.length > 2 ? 53 : 42} height="34.4" rx="16" fill="#fff" stroke="#6b6c6e" strokeWidth="2.2" />
          <text x={x} y={y + 8.6} fontSize="24.5" textAnchor="middle" fill="#48494b">{n}</text>
        </g>
      ))}
      {usRoutes.map(([n, x, y], i) => (
        <g key={i}>
          <path transform={`translate(${x} ${y})`} d="M-21-20q5 5 11 1q6 0 10-2q4 2 10 2q6 4 11-1l6 6q-5 7-2 15q4 10-3 15q-5 4-13 4q-6 0-9 3q-3-3-9-3q-8 0-13-4q-7-5-3-15q3-8-2-15z" fill="#fff" stroke="#6b6c6e" strokeWidth="2.200" strokeLinejoin="round" />
          <text x={x} y={y + 9.500} fontSize="24.5" textAnchor="middle" fill="#48494b">{n}</text>
        </g>
      ))}
      {interstates.map(([n, x, y], i) => (
        <g key={i}>
          <g transform={`translate(${x} ${y}) scale(${n.length > 2 ? 1 : 0.76} 1)`}>
            <path d="M-24-20q6 4 11 1.500q7-3.500 13-2.500q6-1 13 2.500q5 2.500 11-1.500q1 5 2 9q2 14-5 22q-8 8-21 11q-13-3-21-11q-7-8-5-22q1-4 2-9z" fill="#fff" />
            <path d="M-24-20q6 4 11 1q7-4 13-1q6-3 13 1q5 3 11-1l1.500 8.500h-51z" fill="#cd6864" />
            <path d="M-26.500-10h53q1.500 13-6 20q-8 9-20.500 12q-12.500-3-20.500-12q-7.500-7-6-20z" fill="#4c7cc6" />
          </g>
          <text x={x} y={y + 10.500} fontSize="25" fontWeight="700" textAnchor="middle" textLength={n.length > 2 ? 41 : 27} lengthAdjust="spacingAndGlyphs" fill="#fff">{n}</text>
        </g>
      ))}
      {markers.map(([k, x, y], i) => <Marker key={i} kind={k} x={x} y={y} />)}

      <text x="1694" y="1828" fontSize="41" textLength="125" lengthAdjust="spacingAndGlyphs" stroke="#fff" strokeOpacity="0.6" strokeWidth="7" strokeLinejoin="round" paintOrder="stroke"
        className="font-[Lato,sans-serif] font-semibold">
        <tspan fill="#5186ec">G</tspan><tspan fill="#d85040">o</tspan><tspan fill="#f2bc42">o</tspan><tspan fill="#5186ec">g</tspan><tspan fill="#58a55c">l</tspan><tspan fill="#d85040">e</tspan>
      </text>
    </svg>
  );
}

const control = "flex items-center justify-center rounded-[4px] bg-white shadow-[0_2px_6px_rgba(0,0,0,0.28)]";

function MapPanel() {
  return (
    <div className="relative mt-[60px] h-[1500px] w-[1140px] overflow-hidden border-2 border-[#dee2e6] font-[Roboto,sans-serif]">
      <Terrain />
      <div className="absolute top-5 left-5 flex h-20 overflow-hidden rounded-[4px] bg-white text-[36px] leading-none shadow-[0_2px_6px_rgba(0,0,0,0.28)]">
        <div className="flex w-[138px] items-center justify-center pt-[2px] font-medium text-black">Map</div>
        <div className="flex w-[198px] items-center justify-center border-l-2 border-[#f0f0f0] pt-[2px] pr-[2px] text-[#565656]">Satellite</div>
      </div>
      <div className={`absolute top-5 right-5 size-20 ${control}`}>
        <svg viewBox="0 0 36 36" className="size-9" fill="none" stroke="#666" strokeWidth="4"><path d="M2 12V2h10M24 2h10v10M34 24v10H24M12 34H2V24" /></svg>
      </div>
      <div className={`absolute right-5 bottom-[274px] size-20 ${control}`}>
        <svg viewBox="0 0 36 62" className="h-[62px] w-9" stroke="#777469" strokeWidth="1.200" fill="#f1bd4e">
          <path d="M10 22q8-3 16 0q3 1 4 5l4.500 17q-1.500 3-5 1.500l-3-8l-1 23.500h-6.500l-1-17l-1 17h-6.500l-1-23.500l-3 8q-3.500 1.500-5-1.500l4.500-17q1-4 4-5z" />
          <path d="M12 22.500h11l-5.500 10.500z" fill="#d8893f" stroke="none" />
          <circle cx="17.5" cy="11.500" r="10.700" />
        </svg>
      </div>
      <div className="absolute right-5 bottom-12 flex h-[162px] w-20 flex-col items-center rounded-[4px] bg-white shadow-[0_2px_6px_rgba(0,0,0,0.28)]">
        <div className="flex h-20 items-center"><svg viewBox="0 0 36 36" className="size-9" stroke="#666" strokeWidth="8"><path d="M18 0v36M0 18h36" /></svg></div>
        <div className="h-[2px] w-[60px] bg-[#e6e6e6]" />
        <div className="flex h-20 items-center"><svg viewBox="0 0 36 36" className="size-9" stroke="#666" strokeWidth="8"><path d="M0 18h36" /></svg></div>
      </div>
      <div className="absolute right-0 bottom-0 flex h-7 items-center text-[20px] leading-none text-black">
        <span className="flex h-7 w-[240px] items-center justify-center bg-[#f5f5f5]/70 pr-[2px]">Map data ©2020 Google</span>
        <span className="flex h-7 w-[142px] items-center justify-center border-l-2 border-[#c4ddc2]/60 bg-[#f5f5f5]/70 pr-[4px]">Terms of Use</span>
        <span className="flex h-7 w-[190px] items-center justify-center border-l-2 border-[#c4ddc2]/60 bg-[#f5f5f5]/70 pr-[4px]">Report a map error</span>
      </div>
    </div>
  );
}

const letter = [
  "In light of the recent pandemic, there has been a lot of chaos and",
  "discomfort surrounding COVID-19 and its implications. We wanted to",
  "make finding the appropriate help easier for everyone as we pass",
  "through these rough times, and hopefully connect people with the right",
  "resources that they need to continue their well being. This is why we",
  "constructed a website that efficiently maps out all testing locations with",
  "specific information about the services they provide in the San",
  "Francisco Bay Area.",
];

export default function App() {
  return (
    <div className="h-[1924px] w-[3360px] overflow-hidden bg-white font-[Inter,sans-serif] text-[#212529]">
      <header className="flex h-[284px] flex-col items-center bg-[#333] pt-[52px] font-medium text-[#dadadb]">
        <h1 className="text-[78px] leading-[96px] tracking-[-2.6px] whitespace-nowrap">Coronavirus Testing Centers in the Bay Area</h1>
        <h2 className="mt-[14px] text-[46px] leading-[58px] tracking-[-0.9px] whitespace-nowrap">Find your nearest test center today</h2>
      </header>
      <main className="mx-auto grid w-[2280px] grid-cols-2">
        <section className="px-12 pt-[102px]">
          <h2 className="text-[56px] leading-[67px] font-semibold tracking-[-1.05px] whitespace-nowrap">A letter to our supporters</h2>
          <div className="mt-[48px] text-[31px] leading-[48px] tracking-[-0.15px] whitespace-nowrap">
            {letter.map((line) => <p key={line}>{line}</p>)}
          </div>
          <div className="mt-8 text-[31px] leading-[48px] tracking-[-0.5px]">
            <p>Ryan Lazzareschi</p>
            <p>Palavi Lodhia</p>
            <p>Vidit Vinish</p>
          </div>
          <div className="mt-[99px] h-[404px] border-2 border-[#dee2e6] bg-[#2967c6] pt-[34px] text-center font-['Liberation_Mono',monospace] text-[56px] leading-[84px] whitespace-pre text-white">
            <p className="font-bold">{"Latest News: "}</p>
            <p>San Francisco Announces Three</p>
            <p>New Mobile Coronavirus</p>
            <p>Testing Sites for the Public</p>
          </div>
        </section>
        <MapPanel />
        <div className="mt-[60px] ml-[30px] h-40 w-[1080px] rounded-t-[8px] border-2 border-[#dfdfdf] bg-[#f7f7f7]" />
      </main>
    </div>
  );
}
